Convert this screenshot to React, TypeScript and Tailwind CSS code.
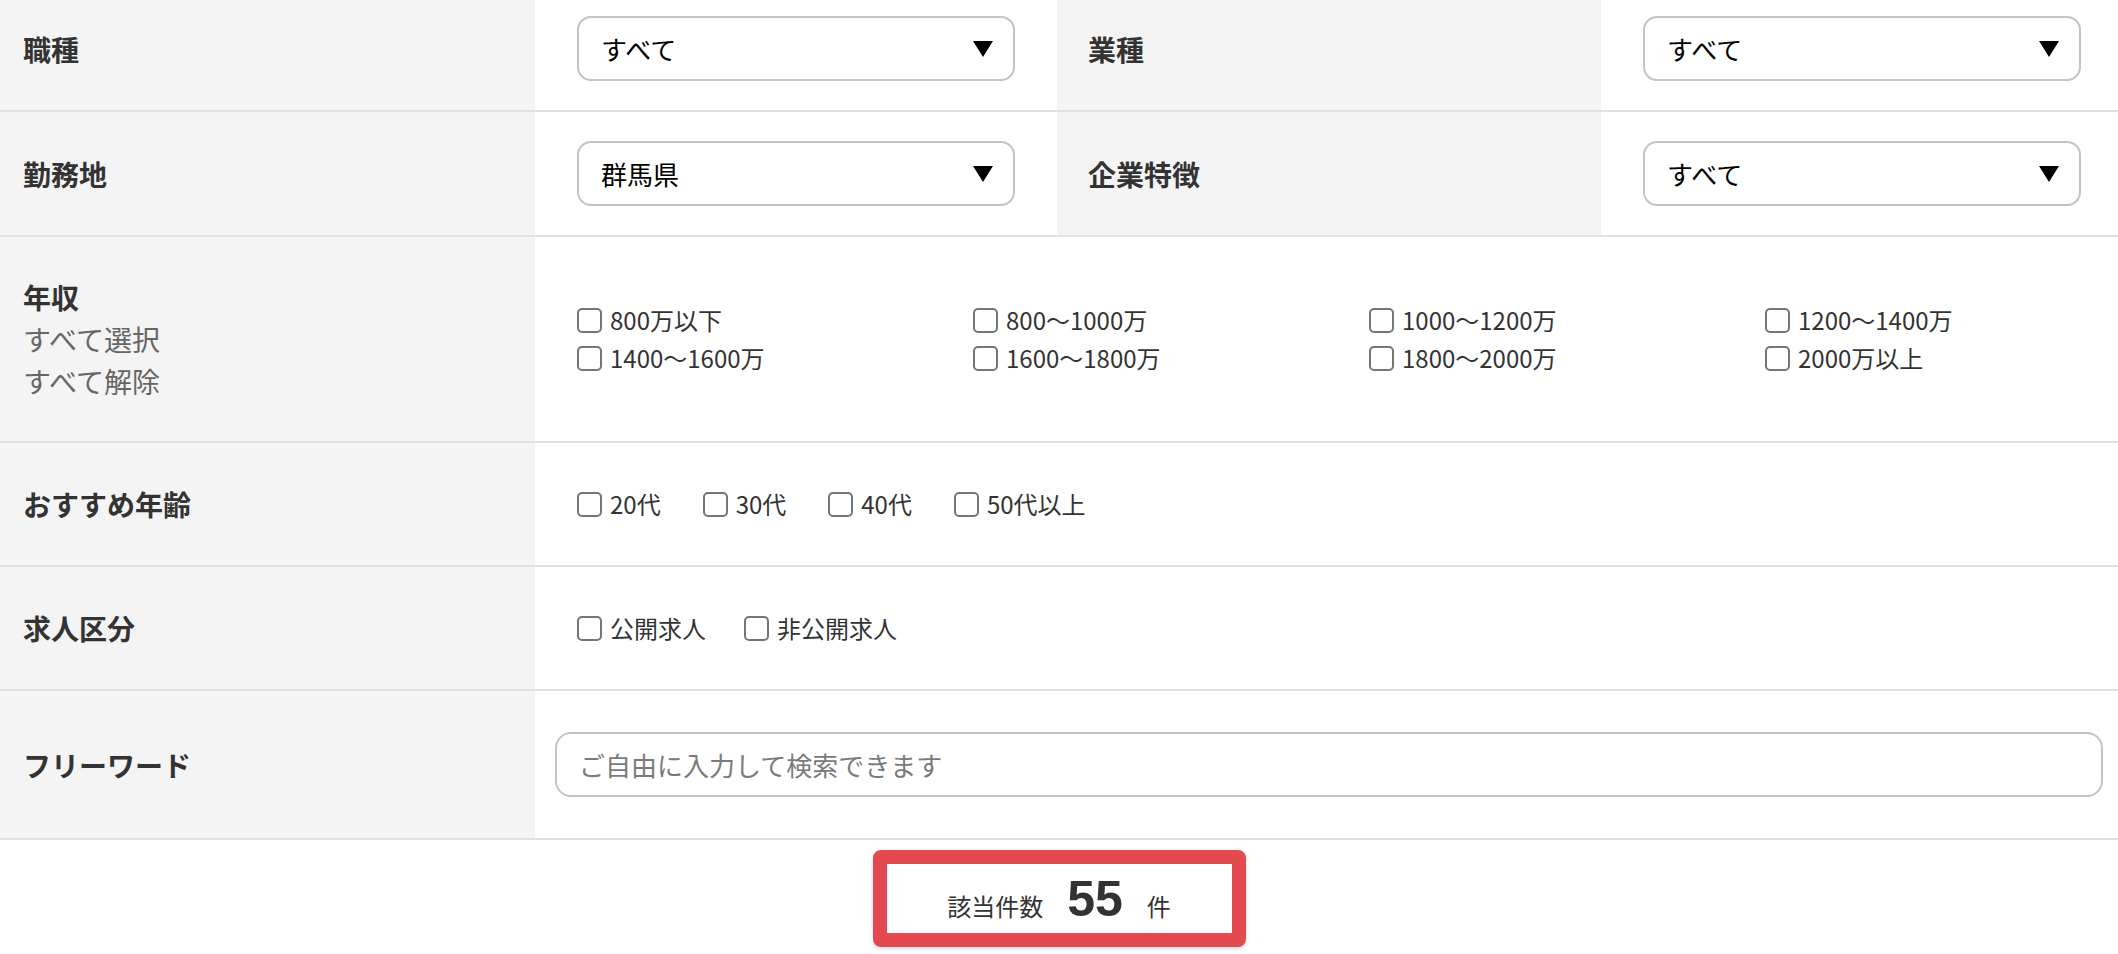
import type { ReactNode } from 'react'

const salaryOptions = [
  '800万以下',
  '800〜1000万',
  '1000〜1200万',
  '1200〜1400万',
  '1400〜1600万',
  '1600〜1800万',
  '1800〜2000万',
  '2000万以上',
]

const ageOptions = ['20代', '30代', '40代', '50代以上']
const jobTypeOptions = ['公開求人', '非公開求人']

const Check = ({ label }: { label: string }) => (
  <label className="flex items-center h-[38px] text-[24px] text-[#333] whitespace-nowrap">
    <span className="w-[25px] h-[25px] mr-[8px] shrink-0 rounded-[5px] border-2 border-[#757575] bg-white" />
    {label}
  </label>
)

const SelectBox = ({ value }: { value: string }) => (
  <div className="w-[438px] h-[65px] flex items-center justify-between pl-[22px] pr-[20px] rounded-[14px] border-2 border-[#c4c4c4] bg-white text-[26px] text-black">
    <span>{value}</span>
    <svg width="20" height="16" viewBox="0 0 20 16">
      <polygon points="0,0 20,0 10,16" fill="#000" />
    </svg>
  </div>
)

const Label = ({ children, className = '' }: { children: ReactNode; className?: string }) => (
  <div className={`shrink-0 flex flex-col justify-center bg-[#f4f4f4] text-[28px] leading-[42px] font-bold text-[#333] ${className}`}>
    {children}
  </div>
)

export default function App() {
  return (
    <div className="h-screen overflow-hidden bg-white font-['Noto_Sans_CJK_JP',sans-serif]">
      <div className="-mt-[13px]">
        {/* 職種 / 業種 */}
        <div className="flex h-[125px] border-b-2 border-[#e1e1e1]">
          <Label className="w-[535px] pl-[23px]">職種</Label>
          <div className="w-[522px] shrink-0 flex items-center pl-[42px]">
            <SelectBox value="すべて" />
          </div>
          <Label className="w-[544px] pl-[31px]">業種</Label>
          <div className="flex-1 min-w-0 flex items-center pl-[42px]">
            <SelectBox value="すべて" />
          </div>
        </div>

        {/* 勤務地 / 企業特徴 */}
        <div className="flex h-[125px] border-b-2 border-[#e1e1e1]">
          <Label className="w-[535px] pl-[23px]">勤務地</Label>
          <div className="w-[522px] shrink-0 flex items-center pl-[42px]">
            <SelectBox value="群馬県" />
          </div>
          <Label className="w-[544px] pl-[31px]">企業特徴</Label>
          <div className="flex-1 min-w-0 flex items-center pl-[42px]">
            <SelectBox value="すべて" />
          </div>
        </div>

        {/* 年収 */}
        <div className="flex h-[206px] border-b-2 border-[#e1e1e1]">
          <Label className="w-[535px] pl-[23px]">
            <span>年収</span>
            <span className="font-normal text-[#666]">すべて選択</span>
            <span className="font-normal text-[#666]">すべて解除</span>
          </Label>
          <div className="flex-1 min-w-0 overflow-hidden flex items-center pl-[42px]">
            <div className="grid grid-cols-[repeat(4,396px)]">
              {salaryOptions.map((o) => (
                <Check key={o} label={o} />
              ))}
            </div>
          </div>
        </div>

        {/* おすすめ年齢 */}
        <div className="flex h-[124px] border-b-2 border-[#e1e1e1]">
          <Label className="w-[535px] pl-[23px]">おすすめ年齢</Label>
          <div className="flex-1 min-w-0 flex items-center gap-[42px] pl-[42px]">
            {ageOptions.map((o) => (
              <Check key={o} label={o} />
            ))}
          </div>
        </div>

        {/* 求人区分 */}
        <div className="flex h-[124px] border-b-2 border-[#e1e1e1]">
          <Label className="w-[535px] pl-[23px]">求人区分</Label>
          <div className="flex-1 min-w-0 flex items-center gap-[38px] pl-[42px]">
            {jobTypeOptions.map((o) => (
              <Check key={o} label={o} />
            ))}
          </div>
        </div>

        {/* フリーワード */}
        <div className="flex h-[149px] border-b-2 border-[#e1e1e1]">
          <Label className="w-[535px] pl-[23px]">フリーワード</Label>
          <div className="flex-1 min-w-0 flex items-center pl-[20px] pr-[15px]">
            <input
              type="text"
              placeholder="ご自由に入力して検索できます"
              className="w-full h-[65px] px-[22px] rounded-[16px] border-2 border-[#c4c4c4] bg-white text-[26px] text-[#333] placeholder:text-[#7a7a7a] outline-none"
            />
          </div>
        </div>

        {/* 該当件数 */}
        <div className="flex justify-center pt-[10px]">
          <div className="w-[373px] h-[97px] flex items-baseline justify-center gap-[24px] pt-[10px] rounded-[8px] border-[14px] border-[#e3494e] bg-white text-[#333] shadow-[0_2px_4px_rgba(0,0,0,0.15)]">
            <span className="text-[24px]">該当件数</span>
            <span className="text-[50px] leading-none font-bold font-['Liberation_Sans',sans-serif]">55</span>
            <span className="text-[24px]">件</span>
          </div>
        </div>
      </div>
    </div>
  )
}
